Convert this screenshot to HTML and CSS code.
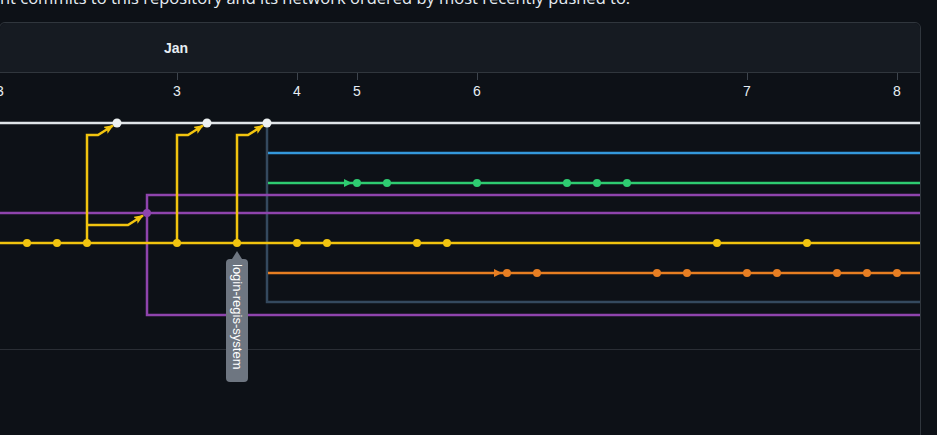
FILE: index.html
```html
<!DOCTYPE html>
<html lang="en">
<head>
<meta charset="utf-8">
<title>Network graph</title>
<link rel="stylesheet" href="styles.css">
</head>
<body>
<p class="intro">nt commits to this repository and its network ordered by most recently pushed to.</p>
<div class="network">
  <div class="months"><span class="month">Jan</span></div>
  <div class="graph">
    <svg class="canvas" width="920" height="276" viewBox="0 73 920 276" xmlns="http://www.w3.org/2000/svg">
      <defs>
        <marker id="arr-y" markerUnits="userSpaceOnUse" markerWidth="10" markerHeight="8" refX="9" refY="4" orient="auto"><path d="M0,0 L10,4 L0,8 L2,4 z" fill="#f1c40f"/></marker>
      </defs>
      <g class="ticks" stroke="#3d444d" stroke-width="1">
        <line x1="-2.5" y1="73" x2="-2.5" y2="80"/>
        <line x1="177.5" y1="73" x2="177.5" y2="80"/>
        <line x1="297.5" y1="73" x2="297.5" y2="80"/>
        <line x1="357.5" y1="73" x2="357.5" y2="80"/>
        <line x1="477.5" y1="73" x2="477.5" y2="80"/>
        <line x1="747.5" y1="73" x2="747.5" y2="80"/>
        <line x1="897.5" y1="73" x2="897.5" y2="80"/>
      </g>
      <g class="days" fill="#e6edf3" font-family="Liberation Sans, Arial, sans-serif" font-size="14" text-anchor="middle">
        <text x="-4" y="96">23</text>
        <text x="177" y="96">3</text>
        <text x="297" y="96">4</text>
        <text x="357" y="96">5</text>
        <text x="477" y="96">6</text>
        <text x="747" y="96">7</text>
        <text x="897" y="96">8</text>
      </g>
      <g fill="none" stroke-width="2.5">
        <polyline points="267,123 267,302 920,302" stroke="#34495e"/>
        <line x1="268" y1="153" x2="920" y2="153" stroke="#3498db"/>
        <line x1="268" y1="183" x2="920" y2="183" stroke="#2ecc71"/>
        <line x1="268" y1="273" x2="920" y2="273" stroke="#e67e22"/>
        <polyline points="920,195 147,195 147,315 920,315" stroke="#8e44ad"/>
        <line x1="0" y1="213" x2="920" y2="213" stroke="#8e44ad"/>
        <line x1="0" y1="243" x2="920" y2="243" stroke="#f1c40f"/>
        <polyline points="87,243 87,135 98,135 113,125.5" stroke="#f1c40f" marker-end="url(#arr-y)"/>
        <polyline points="177,243 177,135 188,135 203,125.5" stroke="#f1c40f" marker-end="url(#arr-y)"/>
        <polyline points="237,243 237,135 248,135 263,125.5" stroke="#f1c40f" marker-end="url(#arr-y)"/>
        <polyline points="87,225 128,225 143,215.5" stroke="#f1c40f" marker-end="url(#arr-y)"/>
        <line x1="0" y1="123" x2="920" y2="123" stroke="#dfe4e8"/>
      </g>
      <path d="M344,179 L352,183 L344,187 z" fill="#2ecc71"/>
      <path d="M494,269 L502,273 L494,277 z" fill="#e67e22"/>
      <g fill="#ecf0f1">
        <circle cx="117" cy="123" r="4.5"/>
        <circle cx="207" cy="123" r="4.5"/>
        <circle cx="267" cy="123" r="4.5"/>
      </g>
      <circle cx="147" cy="213" r="4" fill="#8e44ad"/>
      <g fill="#2ecc71">
        <circle cx="357" cy="183" r="4"/>
        <circle cx="387" cy="183" r="4"/>
        <circle cx="477" cy="183" r="4"/>
        <circle cx="567" cy="183" r="4"/>
        <circle cx="597" cy="183" r="4"/>
        <circle cx="627" cy="183" r="4"/>
      </g>
      <g fill="#f1c40f">
        <circle cx="27" cy="243" r="4"/>
        <circle cx="57" cy="243" r="4"/>
        <circle cx="87" cy="243" r="4"/>
        <circle cx="177" cy="243" r="4"/>
        <circle cx="237" cy="243" r="4"/>
        <circle cx="297" cy="243" r="4"/>
        <circle cx="327" cy="243" r="4"/>
        <circle cx="417" cy="243" r="4"/>
        <circle cx="447" cy="243" r="4"/>
        <circle cx="717" cy="243" r="4"/>
        <circle cx="807" cy="243" r="4"/>
      </g>
      <g fill="#e67e22">
        <circle cx="507" cy="273" r="4"/>
        <circle cx="537" cy="273" r="4"/>
        <circle cx="657" cy="273" r="4"/>
        <circle cx="687" cy="273" r="4"/>
        <circle cx="747" cy="273" r="4"/>
        <circle cx="777" cy="273" r="4"/>
        <circle cx="837" cy="273" r="4"/>
        <circle cx="867" cy="273" r="4"/>
        <circle cx="897" cy="273" r="4"/>
      </g>
    </svg>
    <div class="branch-tip"><span class="branch-name">login-regis-system</span></div>
  </div>
  <div class="below"></div>
</div>
</body>
</html>
```
FILE: styles.css
```css
html, body {
  margin: 0;
  padding: 0;
  background: #0d1117;
  overflow: hidden;
}

.intro {
  margin: -12px 0 0 0;
  height: 20px;
  line-height: 20px;
  font-family: "Open Sans", "Liberation Sans", Arial, sans-serif;
  font-size: 16.5px;
  color: #e6edf3;
  white-space: nowrap;
}

.network {
  margin: 14px 0 0 -1px;
  width: 920px;
  border: 1px solid #30363d;
  border-radius: 6px;
  background: #0d1117;
}

.months {
  height: 49px;
  display: flex;
  align-items: center;
  padding-left: 164px;
  background: #161b22;
  border-bottom: 1px solid #30363d;
  border-radius: 6px 6px 0 0;
}

.month {
  font-family: "Liberation Sans", Arial, sans-serif;
  font-weight: bold;
  font-size: 14px;
  color: #e6edf3;
}

.graph {
  position: relative;
  height: 276px;
  border-bottom: 1px solid #2a2e35;
}

.canvas {
  display: block;
  overflow: visible;
}

.branch-tip {
  position: absolute;
  left: 226px;
  top: 186px;
  width: 22px;
  height: 123px;
  background: #6e7681;
  border-radius: 4px;
  display: flex;
  justify-content: center;
  padding-top: 5px;
  box-sizing: border-box;
}

.branch-tip::before {
  content: "";
  position: absolute;
  top: -8px;
  left: 6px;
  border-left: 5px solid transparent;
  border-right: 5px solid transparent;
  border-bottom: 8px solid #6e7681;
}

.branch-name {
  writing-mode: vertical-rl;
  font-family: "Liberation Sans", Arial, sans-serif;
  font-size: 13px;
  line-height: 22px;
  color: #ffffff;
  white-space: nowrap;
}

.below {
  height: 120px;
}
```
